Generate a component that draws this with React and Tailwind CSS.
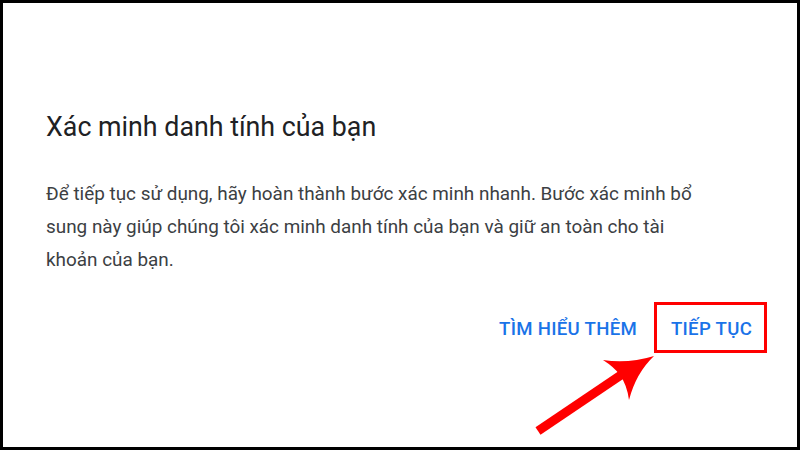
import React from "react";

const Arrow = () => (
  <svg
    className="absolute left-0 top-0 pointer-events-none"
    width="800"
    height="450"
    viewBox="0 0 800 450"
  >
    <line x1="535" y1="428" x2="618" y2="372" stroke="#ff0000" strokeWidth="9" />
    <path
      d="M651 353 Q625 361 600 357 Q611 364 617 372 Q624 382 626 397 Q633 370 651 353 Z"
      fill="#ff0000"
    />
  </svg>
);

const App = () => {
  return (
    <div
      className="relative w-[800px] h-[450px] bg-white border-[3px] border-black overflow-hidden"
      style={{ fontFamily: "Roboto, 'Noto Sans', sans-serif" }}
    >
      <div className="pl-[43px] pt-[104px]">
        <h1 className="text-[26.8px] leading-[40px] text-[#202124] font-normal">
          Xác minh danh tính của bạn
        </h1>
        <p className="mt-[30px] text-[18.9px] leading-[33px] text-[#3c4043]">
          Để tiếp tục sử dụng, hãy hoàn thành bước xác minh nhanh. Bước xác minh bổ
          <br />
          sung này giúp chúng tôi xác minh danh tính của bạn và giữ an toàn cho tài
          <br />
          khoản của bạn.
        </p>
      </div>
      <div className="absolute left-0 right-0 top-[299px] flex justify-end items-center gap-[17px] pr-[30px]">
        <button className="text-[18.6px] font-medium text-[#1a73e8] tracking-[0.3px] h-[51px] pt-[4px]">
          TÌM HIỂU THÊM
        </button>
        <button className="text-[18.6px] font-medium text-[#1a73e8] tracking-[0.3px] h-[51px] w-[113px] pt-[4px] pl-[2px] border-[3px] border-[#ff0000]">
          TIẾP TỤC
        </button>
      </div>
      <Arrow />
    </div>
  );
};

export default App;
